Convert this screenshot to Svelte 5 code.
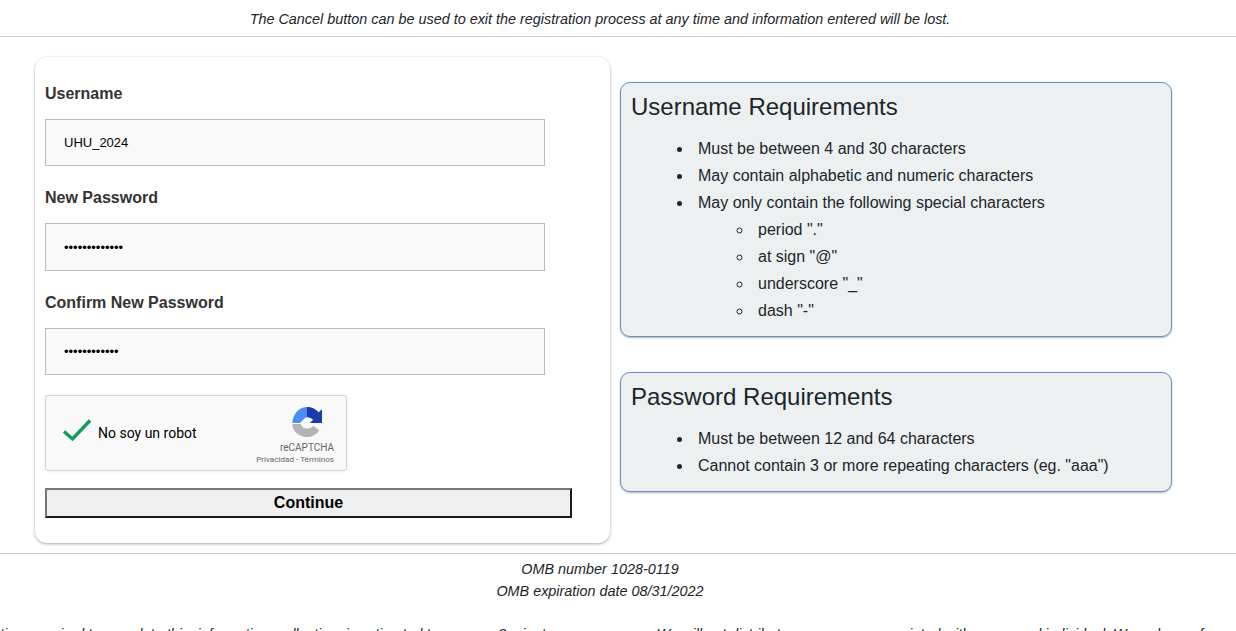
<script>
  const usernameRules = [
    'Must be between 4 and 30 characters',
    'May contain alphabetic and numeric characters',
    'May only contain the following special characters'
  ];
  const specialChars = ['period "."', 'at sign "@"', 'underscore "_"', 'dash "-"'];
  const passwordRules = [
    'Must be between 12 and 64 characters',
    'Cannot contain 3 or more repeating characters (eg. "aaa")'
  ];
</script>

<div class="page">
  <p class="notice">The Cancel button can be used to exit the registration process at any time and information entered will be lost.</p>

  <main class="content">
    <form class="card" on:submit|preventDefault>
      <label for="username">Username</label>
      <input id="username" type="text" value="UHU_2024" />

      <label for="password">New Password</label>
      <input id="password" type="password" value="1234567890123" />

      <label for="confirm">Confirm New Password</label>
      <input id="confirm" type="password" value="123456789012" />

      <div class="captcha">
        <svg class="check" width="30" height="24" viewBox="0 0 30 24">
          <path d="M2 13.500 L10.500 21 L28 2.500" fill="none" stroke="#0f9d58" stroke-width="3.4" />
        </svg>
        <span class="captcha-label">No soy un robot</span>
        <div class="captcha-brand">
          <svg class="logo" width="30" height="30" viewBox="0 0 64 64">
            <path d="M32 0 C18 0 5 10 1 30 V34 H17 L24 27 C26 25 29 23 32 22 Z" fill="#4a8ff0" />
            <path d="M32 0 C42 0 50 4 57 11 L64 5 V34 H38 L45 27 C42 24 37 22 32 22 Z" fill="#1c3aa9" />
            <path d="M1 36 H18 C21 43 26 46 32 46 C38 46 42 44 46 40 L58 50 C52 59 42 64 32 64 C18 64 6 56 1 42 Z" fill="#b4b4b4" />
          </svg>
          <span class="brand-name">reCAPTCHA</span>
          <span class="brand-links">Privacidad - Términos</span>
        </div>
      </div>

      <button type="submit">Continue</button>
    </form>

    <aside class="side">
      <section class="panel">
        <h2>Username Requirements</h2>
        <ul>
          {#each usernameRules as rule}
            <li>{rule}</li>
          {/each}
          <ul>
            {#each specialChars as c}
              <li>{c}</li>
            {/each}
          </ul>
        </ul>
      </section>

      <section class="panel">
        <h2>Password Requirements</h2>
        <ul>
          {#each passwordRules as rule}
            <li>{rule}</li>
          {/each}
        </ul>
      </section>
    </aside>
  </main>

  <footer>
    <p>OMB number 1028-0119</p>
    <p>OMB expiration date 08/31/2022</p>
    <p class="burden">time required to complete <span class="wide">this information collection is</span> estimated to average 8 minutes per response. We will not distribute your names associated with a personal individual. We welcome f</p>
  </footer>
</div>

<style>
  :global(body) {
    margin: 0;
    background: #fff;
    overflow: hidden;
  }
  .page {
    height: 631px;
    overflow: hidden;
    font-family: "Liberation Sans", Arial, sans-serif;
    font-size: 16px;
    color: #212529;
  }
  .notice {
    margin: 0;
    height: 36px;
    padding-right: 36px;
    line-height: 38px;
    font-size: 14.4px;
    font-style: italic;
    text-align: center;
    border-bottom: 1px solid #ccc;
  }
  .content {
    display: flex;
    height: 516px;
    box-sizing: border-box;
    padding: 20px 0 0 35px;
  }
  .card {
    width: 575px;
    height: 486px;
    box-sizing: border-box;
    padding: 28px 10px 0;
    border-radius: 12px;
    box-shadow: 0 1px 3px rgba(0, 0, 0, 0.35);
    display: flex;
    flex-direction: column;
    align-items: flex-start;
  }
  label {
    font-weight: 700;
    color: #333;
    line-height: 18px;
    margin-bottom: 16px;
  }
  input {
    width: 500px;
    height: 47.4px;
    box-sizing: border-box;
    border: 1px solid #bbb;
    background: #f9f9f9;
    padding: 0 18px;
    margin-bottom: 23px;
    font-family: "Liberation Sans", Arial, sans-serif;
    font-size: 13px;
    color: #000;
    outline: none;
    border-radius: 0;
  }
  .captcha {
    width: 302px;
    height: 76px;
    box-sizing: border-box;
    margin-top: -3.2px;
    display: flex;
    align-items: center;
    padding: 0 12px 0 16px;
    background: #f9f9f9;
    border: 1px solid #d3d3d3;
    border-radius: 3px;
    box-shadow: 0 0 4px rgba(0, 0, 0, 0.08);
  }
  .check {
    margin-right: 6px;
    margin-top: -6px;
  }
  .captcha-label {
    font-family: Roboto, sans-serif;
    font-size: 14px;
    color: #000;
  }
  .captcha-brand {
    margin-left: auto;
    align-self: flex-start;
    padding-top: 11px;
    display: flex;
    flex-direction: column;
    align-items: flex-end;
    color: #666;
    font-family: Roboto, sans-serif;
  }
  .logo {
    margin-right: 12px;
  }
  .brand-name {
    font-size: 10px;
    line-height: 12px;
    margin-top: 5px;
  }
  .brand-links {
    font-size: 8px;
    line-height: 12px;
    letter-spacing: 0.05px;
  }
  button {
    width: 527px;
    height: 30px;
    margin-top: 17px;
    background: #efefef;
    border: 2px solid;
    border-color: #767676 #1b1b1b #1b1b1b #767676;
    font-family: "Liberation Sans", Arial, sans-serif;
    font-size: 16px;
    font-weight: 700;
    color: #000;
    padding: 0;
  }
  .side {
    margin-left: 10px;
    padding-top: 25px;
    width: 552px;
    display: flex;
    flex-direction: column;
    gap: 35px;
  }
  .panel {
    box-sizing: border-box;
    background: #ecf0f1;
    border: 1px solid #6b8fc4;
    border-radius: 10px;
    padding: 9px 10px 12px;
    box-shadow: 0 1px 2px rgba(0, 0, 0, 0.3);
  }
  h2 {
    margin: 0 0 14px;
    font-size: 24px;
    font-weight: 400;
    line-height: 29px;
  }
  ul {
    margin: 0;
    padding-left: 62px;
    line-height: 27px;
  }
  ul ul {
    padding-left: 60px;
  }
  li {
    padding-left: 5px;
  }
  footer {
    border-top: 1px solid #ccc;
    padding: 4px 36px 0 0;
    text-align: center;
    font-size: 14.4px;
    font-style: italic;
    line-height: 22px;
  }
  footer p {
    margin: 0;
  }
  .burden {
    margin-top: 21px !important;
    white-space: nowrap;
  }
  .wide {
    word-spacing: 4.5px;
  }
</style>
